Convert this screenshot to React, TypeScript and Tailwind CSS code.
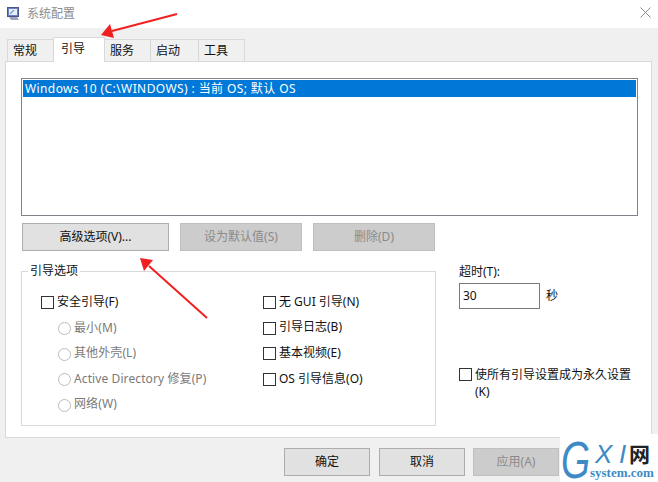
import React from "react";

const font = "[font-family:'Noto_Sans','Noto_Sans_CJK_SC',sans-serif]";

function Tab({ label, active, w, first }: { label: string; active?: boolean; w: string; first?: boolean }) {
  return (
    <div
      className={
        active
          ? `${w} relative z-10 -mb-px -ml-px flex h-[25px] items-start border border-b-0 border-[#d9d9d9] bg-white pl-[7px] pt-[2px] text-[12px] text-[#111]`
          : `${w} ${first ? "" : "-ml-px"} flex h-[22px] items-center border border-b-0 border-[#d9d9d9] bg-[#f0f0f0] pl-[5px] text-[12px] text-[#111]`
      }
    >
      {label}
    </div>
  );
}

function Btn({ label, disabled, w }: { label: string; disabled?: boolean; w: string }) {
  return (
    <div
      className={
        disabled
          ? `${w} flex h-[28px] items-center justify-center border border-[#bfbfbf] bg-[#cccccc] text-[12px] text-[#8a8a8a]`
          : `${w} flex h-[28px] items-center justify-center border border-[#adadad] bg-[#e1e1e1] text-[12px] text-[#111]`
      }
    >
      {label}
    </div>
  );
}

function Check({ label }: { label: string }) {
  return (
    <div className="flex h-[13px] items-center gap-[3px] text-[12px] leading-none text-[#111]">
      <span className="h-[13px] w-[13px] shrink-0 border border-[#333] bg-white" />
      <span className="pb-[2px]">{label}</span>
    </div>
  );
}

function Radio({ label }: { label: string }) {
  return (
    <div className="flex h-[13px] items-center gap-[3px] text-[12px] leading-none text-[#7a7a7a]">
      <span className="h-[13px] w-[13px] shrink-0 rounded-full border border-[#bcbcbc] bg-white" />
      <span className="pb-[2px] tracking-[0.1px]">{label}</span>
    </div>
  );
}

export default function App() {
  return (
    <div className={`${font} relative flex h-[482px] w-[658px] flex-col overflow-hidden bg-white`}>
      {/* title bar */}
      <div className="flex h-[28px] shrink-0 items-center justify-between pl-[7px] pr-[7px]">
        <div className="flex items-center gap-[7px] text-[12px] text-[#8c8c8c]">
          <svg width="13" height="14" viewBox="0 0 13 14">
            <rect x="0.5" y="0.5" width="11" height="9" fill="#6a7fc4" stroke="#4a5490" />
            <rect x="2" y="2" width="8" height="6" fill="#e6eef8" />
            <path d="M3 7l4-4" stroke="#7f9fd7" strokeWidth="1.5" />
            <path d="M2 10h8l2 3H4z" fill="#a0a4b8" />
          </svg>
          <span>系统配置</span>
        </div>
        <svg width="11" height="11" viewBox="0 0 11 11" className="mt-[-3px]">
          <path d="M0.5 0.5l10 10M10.5 0.5l-10 10" stroke="#8a8a8a" strokeWidth="1" fill="none" />
        </svg>
      </div>

      {/* dialog body */}
      <div className="flex min-h-0 flex-1 flex-col bg-[#f0f0f0] pl-[5px] pr-[6px] pt-[8px]">
        <div className="flex h-[25px] shrink-0 items-end pl-[2px]">
          <Tab label="常规" first w="w-[47px]" />
          <Tab label="引导" active w="w-[52px]" />
          <Tab label="服务" w="w-[47px]" />
          <Tab label="启动" w="w-[49px]" />
          <Tab label="工具" w="w-[47px]" />
        </div>

        <div className="flex h-[377px] shrink-0 flex-col border border-[#d9d9d9] bg-white px-[15px] pt-[16px]">
          <div className="h-[138px] w-[617px] shrink-0 border border-[#82828a] p-[1px]">
            <div className="flex h-[17px] items-center bg-[#0078d7] pl-[2px] text-[12px] leading-none tracking-[0.4px] text-white">
              Windows 10 (C:\WINDOWS) : 当前 OS; 默认 OS
            </div>
          </div>

          <div className="mt-[7px] flex shrink-0 pl-[1px]">
            <Btn label="高级选项(V)..." w="w-[147px]" />
            <Btn label="设为默认值(S)" disabled w="w-[122px] ml-[11px]" />
            <Btn label="删除(D)" disabled w="w-[122px] ml-[11px]" />
          </div>

          <div className="mt-[20px] flex">
            <div className="relative h-[155px] w-[415px] shrink-0 border border-[#d9d9d9]">
              <span className="absolute left-[6px] top-[-9px] bg-white px-[2px] text-[12px] leading-[16px] text-[#111]">
                引导选项
              </span>
              <div className="flex pl-[19px] pt-[24px]">
                <div className="flex w-[222px] flex-col">
                  <Check label="安全引导(F)" />
                  <div className="mt-[13px] flex flex-col gap-[12.5px] pl-[17px]">
                    <Radio label="最小(M)" />
                    <Radio label="其他外壳(L)" />
                    <Radio label="Active Directory 修复(P)" />
                    <Radio label="网络(W)" />
                  </div>
                </div>
                <div className="flex flex-col gap-[12.7px]">
                  <Check label="无 GUI 引导(N)" />
                  <Check label="引导日志(B)" />
                  <Check label="基本视频(E)" />
                  <Check label="OS 引导信息(O)" />
                </div>
              </div>
            </div>

            <div className="ml-[23px] flex w-[180px] flex-col">
              <span className="mt-[-7px] text-[12px] leading-[16px] text-[#111]">超时(T):</span>
              <div className="mt-[3px] flex items-center">
                <div className="flex h-[26px] w-[81px] items-center border border-[#7a7a7a] pl-[3px] text-[12px] text-[#111]">
                  30
                </div>
                <span className="ml-[6px] text-[12px] text-[#111]">秒</span>
              </div>
              <div className="mt-[57px] flex items-start gap-[3px] text-[12px] leading-[17px] text-[#111]">
                <span className="mt-[2px] h-[13px] w-[13px] shrink-0 border border-[#333] bg-white" />
                <span>使所有引导设置成为永久设置 (K)</span>
              </div>
            </div>
          </div>
        </div>

        <div className="mt-[10px] flex shrink-0 pl-[279px]">
          <Btn label="确定" w="w-[86px]" />
          <Btn label="取消" w="w-[86px] ml-[9px]" />
          <Btn label="应用(A)" disabled w="w-[86px] ml-[8px]" />
        </div>
      </div>

      {/* watermark */}
      <div className="absolute bottom-0 right-0 h-[48px] w-[98px] bg-white">
        <span className="absolute left-[1px] top-[5px] origin-left scale-x-[0.72] font-['Liberation_Sans'] text-[52px] italic leading-[42px] text-[#3d8ac7]">
          G
        </span>
        <span className="absolute left-[35px] top-[9px] font-['Liberation_Sans'] text-[26px] italic leading-[22px] text-[#3d8ac7]">
          X
        </span>
        <span className="absolute left-[59px] top-[9px] font-['Liberation_Sans'] text-[26px] italic leading-[22px] text-[#3d8ac7]">
          I
        </span>
        <span className="absolute left-[69px] top-[9px] text-[21px] font-bold leading-[22px] text-[#222]">网</span>
        <span className="absolute left-[30px] top-[32px] font-['Liberation_Serif'] text-[13px] font-bold leading-[14px] text-[#3d8ac7]">
          system.com
        </span>
      </div>

      {/* red annotation arrows */}
      <svg className="pointer-events-none absolute left-0 top-0" width="658" height="482" viewBox="0 0 658 482">
        <path d="M177 14L112 31" stroke="#f02020" strokeWidth="2" fill="none" />
        <path d="M101 35L110 24L114 38z" fill="#f02020" />
        <path d="M207 318L149 266" stroke="#f02020" strokeWidth="2" fill="none" />
        <path d="M140 258L153 260L144 271z" fill="#f02020" />
      </svg>
    </div>
  );
}
